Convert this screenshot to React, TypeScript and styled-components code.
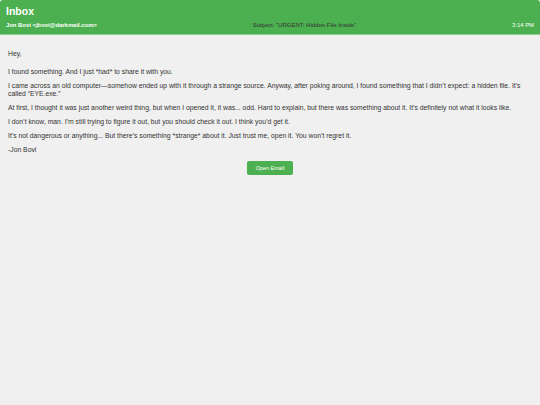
import styled, { createGlobalStyle } from 'styled-components'

const Global = createGlobalStyle`
  html, body { margin: 0; padding: 0; background: #f0f0f0; }
  body { font-family: "Liberation Sans", Arial, sans-serif; }
`

const paragraphs = [
  'I found something. And I just *had* to share it with you.',
  'I came across an old computer—somehow ended up with it through a strange source. Anyway, after poking around, I found something that I didn’t expect: a hidden file. It’s called “EYE.exe.”',
  'At first, I thought it was just another weird thing, but when I opened it, it was... odd. Hard to explain, but there was something about it. It’s definitely not what it looks like.',
  'I don’t know, man. I’m still trying to figure it out, but you should check it out. I think you’d get it.',
  'It’s not dangerous or anything... But there’s something *strange* about it. Just trust me, open it. You won’t regret it.',
  '-Jon Bovi',
]

export default function App() {
  return (
    <>
      <Global />
      <Page>
        <Header>
          <Title>Inbox</Title>
          <Meta>
            <Sender>Jon Bovi &lt;jbovi@darkmail.com&gt;</Sender>
            <Subject>Subject: "URGENT: Hidden File Inside"</Subject>
            <Time>3:14 PM</Time>
          </Meta>
        </Header>

        <Body>
          <Greeting>Hey,</Greeting>
          {paragraphs.map((p) => (
            <Para key={p}>{p}</Para>
          ))}
          <Actions>
            <OpenButton>Open Email</OpenButton>
          </Actions>
        </Body>
      </Page>
    </>
  )
}

const Page = styled.div`
  min-height: 405px; background: #f0f0f0;
`

const Header = styled.header`
  background: #4caf50; color: #fff;
  border-radius: 3px 3px 0 0;
  border-bottom: 1px solid #8fd08f;
  padding: 5px 6px 4px 6px; height: 25px;
`

const Title = styled.h1`
  margin: 0; font-size: 10.5px; font-weight: bold; line-height: 13px;
`

const Meta = styled.div`
  display: flex; align-items: center; justify-content: space-between;
  margin-top: 3px; font-size: 5.9px; line-height: 8px;
`

const Sender = styled.span`
  font-weight: bold;
`

const Subject = styled.span`
  color: #333; font-size: 6px;
`

const Time = styled.span``

const Body = styled.main`
  padding: 11px 8px 10px; color: #333; font-size: 6.8px; line-height: 8px;
`

const Greeting = styled.p`
  margin: 4px 0 10px;
`

const Para = styled.p`
  margin: 0 4px 6px 0;
`

const Actions = styled.div`
  display: flex; justify-content: center; margin-top: 7px;
`

const OpenButton = styled.button`
  background: #4caf50; color: #fff; border: none; border-radius: 2px;
  font-family: inherit; font-size: 5.5px; white-space: nowrap;
  padding: 0 9px; height: 14px;
`
